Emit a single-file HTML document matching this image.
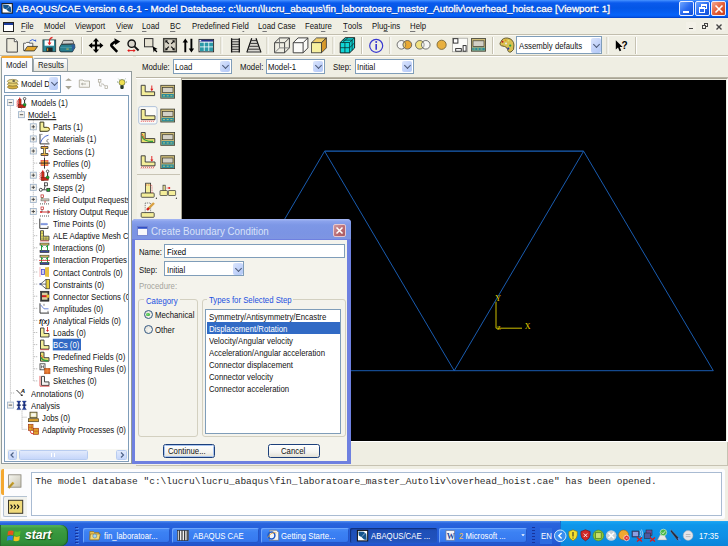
<!DOCTYPE html>
<html><head><meta charset="utf-8">
<style>
*{margin:0;padding:0;box-sizing:border-box}
html,body{width:728px;height:546px;overflow:hidden;background:#EFEEE3;font-family:"Liberation Sans",sans-serif;font-size:7.6px;color:#000;position:relative}
.a{position:absolute}
.t{position:absolute;white-space:nowrap;line-height:10px;font-size:8.8px;transform:scaleX(.885);transform-origin:0 0}
svg{position:absolute;overflow:visible}
#title{left:0;top:0;width:728px;height:18px;background:linear-gradient(#4A94FF 0px,#2A78F8 1.2px,#0A5AEC 3px,#0456E6 8px,#055DF0 12px,#0664FA 15px,#0458EA 16.6px,#003CC4 18px)}
#title .tt{left:16px;top:3px;color:#fff;font-weight:normal;font-size:9.8px;line-height:12px;-webkit-text-stroke:0.3px #fff;text-shadow:0.6px 0.6px 0 #1A3A9A}
.tb{top:1px;width:15px;height:15px;border:1px solid #E8EEFF;border-radius:2px;background:linear-gradient(135deg,#6FA6FF,#2A6BF0 50%,#0E4ED6)}
#menubar{left:0;top:18px;width:728px;height:17px;border-bottom:1px solid #D3CFBE}
.mi{top:3.4px;color:#111}
.mi u{text-decoration:none;border-bottom:1px solid #777;line-height:7.4px;display:inline-block}
.sep{width:1px;background:#C5C2B2;border-right:1px solid #fff}
.combo{background:#fff;border:1px solid #7F9DB9}
.dd{position:absolute;width:10px;background:linear-gradient(135deg,#DCE6FC,#C4D4FA 50%,#B2C8F6);border-radius:2px}
.dd:after{content:"";position:absolute;left:50%;top:50%;width:4px;height:4px;margin-left:-2.1px;margin-top:-3.4px;border-right:1.7px solid #4D5A78;border-bottom:1.7px solid #4D5A78;transform:rotate(45deg)}
</style></head><body>

<!-- TITLE -->
<div id="title" class="a">
 <svg style="left:0;top:0" width="16" height="18"><rect x="2" y="3.6" width="10.3" height="9.5" fill="#fff" stroke="#111" stroke-width="1"/><path d="M3 4.6 L8.2 4.9 L10.8 7 L11.3 12.2 L8.6 11.6 L6.3 9.6 L3.4 8.3 Z" fill="#14558E"/><path d="M4.5 11 L10.6 5" stroke="#fff" stroke-width="0.8" stroke-dasharray="1,0.8"/></svg>
 <div class="t tt" style="transform:scaleX(1.013);transform-origin:0 0">ABAQUS/CAE Version 6.6-1 - Model Database: c:\lucru\lucru_abaqus\fin_laboratoare_master_Autoliv\overhead_hoist.cae [Viewport: 1]</div>
 <div class="a tb" style="left:679px"><div class="a" style="left:3px;top:9px;width:6px;height:2px;background:#fff"></div></div>
 <div class="a tb" style="left:695px"><div class="a" style="left:5px;top:2px;width:6px;height:5px;border:1px solid #fff;border-top-width:2px"></div><div class="a" style="left:2.5px;top:5px;width:6px;height:5.5px;border:1px solid #fff;border-top-width:2px;background:#2A6BF0"></div></div>
 <div class="a tb" style="left:711px;background:linear-gradient(135deg,#F4A890,#E5603A 50%,#C9401A)"><svg style="left:3px;top:3px" width="8" height="8"><path d="M0.5 0.5 L7.5 7.5 M7.5 0.5 L0.5 7.5" stroke="#fff" stroke-width="1.6"/></svg></div>
</div>

<!-- MENU -->
<div id="menubar" class="a">
 <svg style="left:3px;top:4px" width="11" height="10"><rect x="0.5" y="0.5" width="10" height="9" fill="#fff" stroke="#222"/><rect x="1" y="1" width="9" height="2" fill="#1C3C9C"/></svg>
 <div class="t mi" style="left:20.6px"><u>F</u>ile</div>
 <div class="t mi" style="left:43.7px"><u>M</u>odel</div>
 <div class="t mi" style="left:75px">Vie<u>w</u>port</div>
 <div class="t mi" style="left:116px"><u>V</u>iew</div>
 <div class="t mi" style="left:142.2px"><u>L</u>oad</div>
 <div class="t mi" style="left:170.2px"><u>B</u>C</div>
 <div class="t mi" style="left:191.7px">Predefined Fie<u>l</u>d</div>
 <div class="t mi" style="left:257.9px">L<u>o</u>ad Case</div>
 <div class="t mi" style="left:304.6px">Feat<u>u</u>re</div>
 <div class="t mi" style="left:343px"><u>T</u>ools</div>
 <div class="t mi" style="left:371.9px">Plu<u>g</u>-ins</div>
 <div class="t mi" style="left:409.5px"><u>H</u>elp</div>
 <div class="a" style="left:685.5px;top:3.5px;width:10.5px;height:9.5px;background:#F3F1E8;border-radius:1px"><div class="a" style="left:3px;top:6px;width:4px;height:1.5px;background:#444"></div></div>
 <div class="a" style="left:699.5px;top:3.5px;width:10.5px;height:9.5px;background:#F3F1E8;border-radius:1px"><div class="a" style="left:4px;top:1.5px;width:4.5px;height:4px;border:1px solid #444;border-top-width:1.5px"></div><div class="a" style="left:2px;top:3.5px;width:4.5px;height:4px;border:1px solid #444;border-top-width:1.5px;background:#F3F1E8"></div></div>
 <div class="a" style="left:713.5px;top:3.5px;width:11px;height:9.5px;background:#F3F1E8;border-radius:1px"><svg style="left:2.5px;top:2px" width="6" height="6"><path d="M0.5 0.5 L5.5 5.5 M5.5 0.5 L0.5 5.5" stroke="#444" stroke-width="1.4"/></svg></div>
</div>

<!-- TOOLBAR -->
<div class="a" style="left:0;top:34px;width:728px;height:1px;background:#C2BEAE"></div>
<div class="a" style="left:0;top:35px;width:728px;height:1px;background:#FBFAF4"></div>
<div class="a" style="left:0;top:55px;width:728px;height:1px;background:#C2BEAE"></div>
<div class="a" style="left:0;top:56px;width:728px;height:1px;background:#FFFFFF"></div>
<svg style="left:0;top:0" width="728" height="57">
 <g fill="#C6C2B2"><rect x="81" y="37" width="1" height="17"/><rect x="220.5" y="37" width="1" height="17"/><rect x="266.5" y="37" width="1" height="17"/><rect x="332.5" y="37" width="1" height="17"/><rect x="361" y="37" width="1" height="17"/><rect x="389.3" y="37" width="1" height="17"/><rect x="492" y="37" width="1" height="17"/><rect x="606.5" y="37" width="1" height="17"/><rect x="635" y="37" width="1" height="17"/></g>
 <g fill="#FFFFFF"><rect x="82" y="37" width="1" height="17"/><rect x="221.5" y="37" width="1" height="17"/><rect x="267.5" y="37" width="1" height="17"/><rect x="333.5" y="37" width="1" height="17"/><rect x="362" y="37" width="1" height="17"/><rect x="390.3" y="37" width="1" height="17"/><rect x="493" y="37" width="1" height="17"/><rect x="607.5" y="37" width="1" height="17"/><rect x="636" y="37" width="1" height="17"/></g>
 <!-- new -->
 <path d="M6.8 38.6 H14.3 L17.4 41.7 V52.1 H6.8 Z" fill="#EEEBDD" stroke="#4A4A4A" stroke-width="1"/>
 <path d="M14.3 38.6 V41.7 H17.4" fill="#FFF" stroke="#4A4A4A" stroke-width="0.9"/>
 <!-- open -->
 <path d="M23.6 43.2 H25.8 L26.6 42.4 H29.5 V43.2 H32.8 V50.6 H23.6 Z" fill="#F8F8F6" stroke="#555" stroke-width="0.9"/>
 <path d="M24.3 50.9 L27.4 46.4 H37.6 L34.3 50.9 Z" fill="#E6A82C" stroke="#2A2A2A" stroke-width="0.8"/>
 <path d="M29.5 41.2 Q32.3 38.2 35.3 40.8" fill="none" stroke="#3A62D8" stroke-width="1"/>
 <path d="M34 40.2 L36.2 42 L36.1 39.4 Z" fill="#3A62D8"/>
 <!-- save -->
 <rect x="42.9" y="39.9" width="12.8" height="11.8" fill="#2B8898" stroke="#2A3A3A" stroke-width="0.8"/>
 <rect x="44.6" y="40.4" width="9.4" height="5.3" fill="#FFF"/>
 <rect x="46.4" y="47.5" width="6.2" height="4.2" fill="#1E2424"/>
 <rect x="47.2" y="48.3" width="1" height="2.5" fill="#F0A820"/>
 <path d="M49.5 44.3 V40.5 Q49.8 38 52.5 37.4" fill="none" stroke="#E02828" stroke-width="1.2"/>
 <path d="M47.5 42.6 L49.5 45.2 L51.5 42.6 Z" fill="#E02828"/>
 <!-- print -->
 <path d="M61.6 44.2 L63.4 40.4 H72.6 L73.8 43.6 Z" fill="#F2F2F0" stroke="#2A2A2A" stroke-width="0.8"/>
 <path d="M63.6 41.8 H72.2 M63 43 H72.8" stroke="#9A9A9A" stroke-width="0.6"/>
 <path d="M59.6 47.2 L61.2 44.4 H74.6 L74.9 47.6 L72.4 51.9 H61 Q59.6 51.6 59.6 50.2 Z" fill="#2A7E8E" stroke="#1A2A30" stroke-width="0.8"/>
 <path d="M71.5 44.6 L74.6 44.6 L74.8 47.6 L72.4 51.6 L71.8 48 Z" fill="#2E5E9A"/>
 <path d="M60.2 47.4 H72" stroke="#5AAAB8" stroke-width="0.6"/>
 <rect x="66.3" y="48.6" width="2.4" height="0.9" fill="#D8C050"/>
 <!-- move -->
 <path d="M96 40.5 V50.5 M91 45.5 H101" stroke="#000" stroke-width="2.2"/>
 <path d="M96 38 L92.9 41.6 H99.1 Z M96 53 L92.9 49.4 H99.1 Z M88.6 45.5 L92.2 42.4 V48.6 Z M103.4 45.5 L99.8 42.4 V48.6 Z" fill="#000"/>
 <!-- rotate -->
 <path d="M117.2 51.8 L111.9 46.4 Q110.8 45.2 112 43.9 L115.2 41.4" fill="none" stroke="#000" stroke-width="2.6"/>
 <path d="M114.4 38.3 L120.2 41.6 L115.2 45 Z" fill="#000"/>
 <!-- zoom -->
 <circle cx="131.7" cy="43.7" r="3.7" fill="#D9D6CC" stroke="#111" stroke-width="1.4"/>
 <path d="M134.4 46.4 L138.6 50.5" stroke="#111" stroke-width="1.9"/>
 <path d="M128.6 50.6 H134.2" stroke="#E01818" stroke-width="1"/>
 <path d="M127.2 50.6 L129.3 49 V52.2 Z M135.6 50.6 L133.5 49 V52.2 Z" fill="#E01818"/>
 <!-- box zoom -->
 <rect x="144.5" y="38.6" width="8.4" height="8.2" fill="#E6E2D2" stroke="#333" stroke-width="1"/>
 <path d="M152.6 46.2 L157.6 48.9 L155.5 49.6 L157.4 51.6 L156.5 52.5 L154.6 50.5 L153.7 52.4 Z" fill="#000"/>
 <!-- autofit -->
 <rect x="163.7" y="38.7" width="12.6" height="13" fill="#D6D2C4" stroke="#3E3E38" stroke-width="1.5"/>
 <path d="M166 41 L168.8 43.9 M174 41 L171.2 43.9 M166 49.6 L168.8 46.7 M174 49.6 L171.2 46.7" stroke="#111" stroke-width="1.1"/>
 <path d="M165.2 40.2 L168 40.6 L165.6 43 Z M174.8 40.2 L172 40.6 L174.4 43 Z M165.2 50.4 L168 50 L165.6 47.6 Z M174.8 50.4 L172 50 L174.4 47.6 Z" fill="#111"/>
 <!-- up down -->
 <path d="M185.3 41.5 V52.3 M191.4 38.8 V49.6" stroke="#000" stroke-width="1.9"/>
 <path d="M182.6 42.4 L185.3 38.6 L188 42.4 Z M188.7 48.6 L191.4 52.4 L194.1 48.6 Z" fill="#000"/>
 <!-- grid -->
 <rect x="199" y="39.4" width="14.6" height="12.4" fill="#FFF" stroke="#222" stroke-width="0.9"/>
 <rect x="199.4" y="39.8" width="13.8" height="1.8" fill="#22308E"/>
 <rect x="199.6" y="40.1" width="1.6" height="1.1" fill="#FFF"/>
 <g fill="#2B9AA8"><rect x="200" y="42.6" width="3.8" height="3.9"/><rect x="204.6" y="42.6" width="3.8" height="3.9"/><rect x="209.2" y="42.6" width="3.8" height="3.9"/><rect x="200" y="47.3" width="3.8" height="3.9"/><rect x="204.6" y="47.3" width="3.8" height="3.9"/><rect x="209.2" y="47.3" width="3.8" height="3.9"/></g>
 <!-- ladder -->
 <rect x="231.6" y="38.8" width="7.6" height="13.2" fill="#D8D6D0"/>
 <path d="M231.6 38.2 V52.5 M239.3 38.2 V52.5" stroke="#111" stroke-width="1.3"/>
 <path d="M231.6 39.3 H239.3 M231.6 41.8 H239.3 M231.6 44.3 H239.3 M231.6 46.8 H239.3 M231.6 49.3 H239.3 M231.6 51.8 H239.3" stroke="#222" stroke-width="0.9"/>
 <!-- tri ladder -->
 <path d="M251.7 38.4 L247 52.2 H260.8 L256 38.4 Z" fill="#D8D6D0"/>
 <path d="M251.7 38.2 L246.8 52.4 M256 38.2 L261 52.4" stroke="#111" stroke-width="1.2"/>
 <path d="M251.2 40.6 H256.6 M250.3 43.4 H257.6 M249.3 46.3 H258.6 M248.3 49.2 H259.6 M247 52 H260.8" stroke="#222" stroke-width="0.9"/>
 <!-- wire cube -->
 <g fill="none" stroke="#333" stroke-width="0.9">
  <path d="M274.6 42.7 H284.6 V52.8 H274.6 Z M279.5 37.9 H289.4 V47.9 M274.6 42.7 L279.5 37.9 M284.6 42.7 L289.4 37.9 M284.6 52.8 L289.4 47.9"/>
  <path d="M279.5 37.9 V47.9 H289.4 M279.5 47.9 L274.6 52.8" stroke="#777"/>
 </g>
 <!-- hidden cube -->
 <g fill="#FBFBF8" stroke="#333" stroke-width="0.9">
  <path d="M293.2 42.7 L298.1 37.9 H307.9 V47.9 L303.1 52.8 H293.2 Z"/>
  <path d="M293.2 42.7 H303.1 V52.8 M303.1 42.7 L307.9 37.9" fill="none"/>
 </g>
 <!-- shaded cube -->
 <path d="M311.6 42.7 L316.5 37.9 H326.4 L321.5 42.7 Z" fill="#F0CE6A" stroke="#333" stroke-width="0.8"/>
 <path d="M321.5 42.7 L326.4 37.9 V47.9 L321.5 52.8 Z" fill="#D89A2A" stroke="#333" stroke-width="0.8"/>
 <rect x="311.6" y="42.7" width="9.9" height="10.1" fill="#F6EFA0" stroke="#333" stroke-width="0.8"/>
 <!-- mesh cube -->
 <path d="M340.2 42.5 L345.2 37.7 H354.6 V48 L349.6 52.9 H340.2 Z" fill="#12D6D6" stroke="#111" stroke-width="0.9"/>
 <path d="M340.2 42.5 H349.6 V52.9 M349.6 42.5 L354.6 37.7 M340.2 47.7 H349.6 M344.9 42.5 V52.9 M349.6 47.7 L354.6 42.8 M352.1 40.1 V50.4 M342.7 40.1 H352.1 M347.9 37.7 L342.7 42.5" fill="none" stroke="#0A3030" stroke-width="0.8"/>
 <!-- info -->
 <circle cx="376.2" cy="45.8" r="6.5" fill="none" stroke="#3838D0" stroke-width="1.2"/>
 <circle cx="376.2" cy="42" r="1" fill="#3838D0"/>
 <path d="M376.2 44 V49.8" stroke="#3838D0" stroke-width="1.6"/>
 <!-- venn1 -->
 <circle cx="401.4" cy="44.8" r="4.3" fill="#F6F6F4" stroke="#505050" stroke-width="0.8"/>
 <circle cx="407.4" cy="44.8" r="4.3" fill="#E9A832" stroke="#505050" stroke-width="0.8"/>
 <path d="M404.4 41.7 A4.3 4.3 0 0 1 404.4 47.9 A4.3 4.3 0 0 1 404.4 41.7 Z" fill="#F0D070" stroke="#505050" stroke-width="0.6"/>
 <!-- venn2 -->
 <circle cx="419.8" cy="44.8" r="4.3" fill="#F0E080" stroke="#505050" stroke-width="0.8"/>
 <circle cx="425.8" cy="44.8" r="4.3" fill="#F6F6F4" stroke="#505050" stroke-width="0.8"/>
 <path d="M422.8 41.7 A4.3 4.3 0 0 1 422.8 47.9" fill="none" stroke="#505050" stroke-width="0.6"/>
 <!-- circle -->
 <circle cx="441.6" cy="44.8" r="4.6" fill="#E8B040" stroke="#6A5A30" stroke-width="0.8"/>
 <!-- layout -->
 <rect x="452.6" y="38.2" width="15" height="13.6" fill="#FBFBF8" stroke="#9A9A94" stroke-width="0.7"/>
 <rect x="453.3" y="38.7" width="4.6" height="4.4" fill="#FFF" stroke="#222" stroke-width="0.9"/>
 <rect x="455.7" y="48.6" width="5.6" height="2.6" fill="#FFF" stroke="#222" stroke-width="0.9"/>
 <rect x="463.1" y="45.6" width="3" height="5.6" fill="#FFF" stroke="#222" stroke-width="0.9"/>
 <!-- monitor -->
 <rect x="471.4" y="38.6" width="14.2" height="12.6" fill="#CDBB78" stroke="#3A3A30" stroke-width="0.8"/>
 <rect x="473" y="40.8" width="11" height="5.6" fill="#D3D0C6" stroke="#3A3A30" stroke-width="0.7"/>
 <rect x="472.2" y="47.6" width="12.6" height="2.9" fill="#2A8C9C"/>
 <path d="M473.5 49 H475.5 M477 49 H479 M480.5 49 H482.5" stroke="#E0D070" stroke-width="0.7"/>
 <!-- palette -->
 <path d="M501 41.5 Q502.5 37.6 507.5 38 Q513.5 39 514 45 Q514.5 50.5 511 52 Q508 52.8 507.5 49.5 Q507 47 504.5 46.5 Q500.6 46 500 44.5 Q499.6 43 501 41.5 Z" fill="#D8C050" stroke="#4A4020" stroke-width="0.8"/>
 <circle cx="502.5" cy="41.8" r="1" fill="#C02020"/><circle cx="505.6" cy="40.3" r="0.9" fill="#E09020"/><circle cx="508.5" cy="40.6" r="0.9" fill="#E8E070"/><circle cx="506" cy="43.6" r="1" fill="#E8E8E8"/><circle cx="510.2" cy="45.6" r="1.1" fill="#20A040"/><circle cx="508.3" cy="48.6" r="1.1" fill="#2838A0"/>
 <!-- help cursor -->
 <path d="M615.8 40.2 L615.8 49.6 L618 47.6 L619.6 51.2 L621.2 50.5 L619.7 47 L622.6 47 Z" fill="#000"/>
 <text x="621.5" y="48.5" font-family="Liberation Sans" font-weight="bold" font-size="10" fill="#000">?</text>
</svg>
<div class="a combo" style="left:516.4px;top:36px;width:86px;height:18.3px"><div class="t" style="left:1.2px;top:3.6px;color:#111">Assembly defaults</div><div class="dd" style="left:73.5px;top:1.2px;height:14.6px"></div></div>

<!-- LEFT PANEL -->
<div class="a" style="left:33px;top:57.5px;width:35px;height:14px;border:1px solid #9CA8B4;border-bottom:none;border-radius:2px 2px 0 0;background:linear-gradient(#FFFFFF,#F0EFE8 60%,#E4E2D8)"></div>
<div class="t" style="left:37.5px;top:60.3px;color:#222">Results</div>
<div class="a" style="left:0.5px;top:71px;width:131.5px;height:393px;background:#FCFCFE;border:1px solid #919B9C"></div>
<div class="a" style="left:1px;top:56px;width:32px;height:16px;border:1px solid #919B9C;border-bottom:none;border-radius:2px 2px 0 0;background:#FCFCFE"></div>
<div class="a" style="left:1px;top:56px;width:32px;height:2.2px;background:#F4A830;border-radius:2px 2px 0 0"></div>
<div class="t" style="left:5.8px;top:59.8px;color:#222">Model</div>
<div class="a combo" style="left:4.3px;top:75.3px;width:56.3px;height:17.3px">
 <div class="t" style="left:16px;top:2.6px;color:#111">Model D</div>
 <div class="dd" style="left:43.7px;top:0.9px;height:13px;width:9.4px"></div>
</div>
<svg style="left:0;top:0" width="133" height="470">
 <g transform="translate(7.2,78.8)">
  <ellipse cx="5.5" cy="8.3" rx="5.3" ry="1.8" fill="#D8B040" stroke="#6A5A20" stroke-width="0.6"/>
  <ellipse cx="5.5" cy="5.5" rx="5.3" ry="1.8" fill="#E8D070" stroke="#6A5A20" stroke-width="0.6"/>
  <ellipse cx="5.5" cy="2.5" rx="5.3" ry="1.9" fill="#F0E090" stroke="#6A5A20" stroke-width="0.6"/>
  <ellipse cx="6.5" cy="2.2" rx="1.5" ry="0.7" fill="#333"/>
 </g>
 <path d="M65.2 80.8 L68.5 78.2 L71.9 80.8 Z M65.2 86 L68.5 89.6 L71.9 86 Z" fill="#A8A496"/>
 <path d="M79.3 80 H83 L84 81 H89.5 V87.3 H79.3 Z" fill="#F6F5F0" stroke="#A8A496" stroke-width="0.8"/>
 <path d="M81.5 84 H86 M81.5 84 L82.8 83 M81.5 84 L82.8 85" stroke="#8A877A" stroke-width="0.6"/>
 <rect x="98.3" y="79.5" width="2.6" height="2.6" fill="#fff" stroke="#A8A496" stroke-width="0.7"/>
 <rect x="105" y="85.8" width="2.6" height="2.6" fill="#fff" stroke="#A8A496" stroke-width="0.7"/>
 <path d="M99.6 82.1 V86 H102 M101 84 Q104 83 104.5 86" fill="none" stroke="#A8A496" stroke-width="0.7"/>
 <circle cx="122" cy="82.5" r="3" fill="#F0E050" stroke="#4A5A30" stroke-width="0.6"/>
 <rect x="120.3" y="85.3" width="3.4" height="3.6" fill="#2A3A2A" rx="0.8"/>
 <path d="M117 82 H118 M126 82 H127 M118.5 78.8 L119.3 79.6 M125.5 78.8 L124.7 79.6" stroke="#4A7A4A" stroke-width="0.7"/>
</svg>
<div class="a" style="left:4.3px;top:95px;width:124.7px;height:366.5px;background:#fff;border:1px solid #7F9DB9;overflow:hidden">
<svg style="left:-5.3px;top:-96px" width="133" height="470">
 <g stroke="#B0B0B0" stroke-width="1" stroke-dasharray="1,1" fill="none">
 <path d="M10.4 105.6 V402.1 M10.9 393.0 H15 M21.5 108.1 V111.69999999999999 M33.3 119.69999999999999 V380.9 M33.8 126.8 H38 M33.8 138.89999999999998 H38 M33.8 151.0 H38 M33.8 163.1 H38 M33.8 175.2 H38 M33.8 187.3 H38 M33.8 199.39999999999998 H38 M33.8 211.5 H38 M33.8 223.6 H38 M33.8 235.7 H38 M33.8 247.79999999999998 H38 M33.8 259.9 H38 M33.8 272.0 H38 M33.8 284.1 H38 M33.8 296.2 H38 M33.8 308.29999999999995 H38 M33.8 320.4 H38 M33.8 332.5 H38 M33.8 344.6 H38 M33.8 356.7 H38 M33.8 368.79999999999995 H38 M33.8 380.9 H38 M22 410.6 V429.29999999999995 M22.5 417.19999999999993 H27 M22.5 429.29999999999995 H27"/>
 </g>
 <rect x="7.4" y="99.6" width="6" height="6" fill="#F4F2EC" stroke="#9AB0C8" stroke-width="0.8"/>
 <path d="M8.700000000000001 102.6 H12.1" stroke="#333" stroke-width="0.8"/>
 <g transform="translate(16.0,97.1)"><path d="M0.6 3 L2 4 L0.6 5 L2 6 L0.6 7 L2 8 L0.6 9 L2 10" fill="none" stroke="#E83030" stroke-width="0.6"/><path d="M3.8 0 L2.6 2.6 H5 Z" fill="#E02020"/><rect x="2.6" y="2.4" width="2.5" height="8.3" fill="#D02A1A" stroke="#6A1A10" stroke-width="0.4"/><rect x="2.6" y="7.6" width="6.8" height="3.1" fill="#C02818" stroke="#5A1A10" stroke-width="0.4"/><circle cx="8.6" cy="1.6" r="1.25" fill="#fff" stroke="#222" stroke-width="0.7"/><path d="M8.6 2.9 V6.3" stroke="#111" stroke-width="0.9"/><circle cx="8.6" cy="7.6" r="1.5" fill="#1EA030" stroke="#0A3A10" stroke-width="0.4"/></g>
 <rect x="18.5" y="111.69999999999999" width="6" height="6" fill="#F4F2EC" stroke="#9AB0C8" stroke-width="0.8"/>
 <path d="M19.8 114.69999999999999 H23.2" stroke="#333" stroke-width="0.8"/>
 <rect x="30.299999999999997" y="123.8" width="6" height="6" fill="#F4F2EC" stroke="#9AB0C8" stroke-width="0.8"/>
 <path d="M31.599999999999998 126.8 H35.0 M33.3 125.1 V128.5" stroke="#333" stroke-width="0.8"/>
 <g transform="translate(39.0,121.3)"><path d="M1 0.8 H4.8 V6 H8 Q10.5 6 10.5 8 Q10.5 10 8 10 H1 Z" fill="#F4EE9A" stroke="#3A3A20" stroke-width="1"/><path d="M8.5 6.2 Q10.3 6.5 10.3 8" fill="none" stroke="#C89020" stroke-width="1"/></g>
 <rect x="30.299999999999997" y="135.89999999999998" width="6" height="6" fill="#F4F2EC" stroke="#9AB0C8" stroke-width="0.8"/>
 <path d="M31.599999999999998 138.89999999999998 H35.0 M33.3 137.2 V140.59999999999997" stroke="#333" stroke-width="0.8"/>
 <g transform="translate(39.0,133.39999999999998)"><path d="M1 0.5 V10.5 H10.5" fill="none" stroke="#222" stroke-width="0.9"/><path d="M1.5 9.5 Q3.5 3 9.5 1.8" fill="none" stroke="#3A5AC8" stroke-width="0.9"/><path d="M7.5 7 L9.5 6 M7.5 8 L9.5 9" stroke="#333" stroke-width="0.7"/><path d="M2 1 H3.5" stroke="#555" stroke-width="0.6"/></g>
 <rect x="30.299999999999997" y="148.0" width="6" height="6" fill="#F4F2EC" stroke="#9AB0C8" stroke-width="0.8"/>
 <path d="M31.599999999999998 151.0 H35.0 M33.3 149.3 V152.7" stroke="#333" stroke-width="0.8"/>
 <g transform="translate(39.0,145.5)"><path d="M2 1 H9 V3 H6.5 V8 H9 V10 H2 V8 H4.5 V3 H2 Z" fill="#E8B040" stroke="#333" stroke-width="0.8"/><path d="M5.5 0 V1 M5.5 10 V11 M9.5 5.5 H11" stroke="#E02020" stroke-width="0.8"/><rect x="4.8" y="3.5" width="1.4" height="4" fill="#F8E080"/></g>
 <g transform="translate(39.0,157.6)"><rect x="2" y="3" width="7" height="5" fill="#F0A040" stroke="#E04040" stroke-width="0.7"/><path d="M5.5 0 V11 M0 5.5 H11" stroke="#222" stroke-width="0.9"/></g>
 <rect x="30.299999999999997" y="172.2" width="6" height="6" fill="#F4F2EC" stroke="#9AB0C8" stroke-width="0.8"/>
 <path d="M31.599999999999998 175.2 H35.0 M33.3 173.5 V176.89999999999998" stroke="#333" stroke-width="0.8"/>
 <g transform="translate(39.0,169.7)"><path d="M0.6 3 L2 4 L0.6 5 L2 6 L0.6 7 L2 8 L0.6 9 L2 10" fill="none" stroke="#E83030" stroke-width="0.6"/><path d="M3.8 0 L2.6 2.6 H5 Z" fill="#E02020"/><rect x="2.6" y="2.4" width="2.5" height="8.3" fill="#D02A1A" stroke="#6A1A10" stroke-width="0.4"/><rect x="2.6" y="7.6" width="6.8" height="3.1" fill="#C02818" stroke="#5A1A10" stroke-width="0.4"/><circle cx="8.6" cy="1.6" r="1.25" fill="#fff" stroke="#222" stroke-width="0.7"/><path d="M8.6 2.9 V6.3" stroke="#111" stroke-width="0.9"/><circle cx="8.6" cy="7.6" r="1.5" fill="#1EA030" stroke="#0A3A10" stroke-width="0.4"/></g>
 <rect x="30.299999999999997" y="184.3" width="6" height="6" fill="#F4F2EC" stroke="#9AB0C8" stroke-width="0.8"/>
 <path d="M31.599999999999998 187.3 H35.0 M33.3 185.60000000000002 V189.0" stroke="#333" stroke-width="0.8"/>
 <g transform="translate(39.0,181.8)"><circle cx="1.8" cy="8" r="1.5" fill="#fff" stroke="#222" stroke-width="0.8"/><path d="M3.3 8 H7.5 M5 8 L6.5 3" stroke="#222" stroke-width="0.8"/><rect x="5.5" y="1" width="3" height="3" fill="#eee" stroke="#222" stroke-width="0.7"/><rect x="7.8" y="6.5" width="3" height="3" fill="#20B030" stroke="#222" stroke-width="0.7"/></g>
 <rect x="30.299999999999997" y="196.39999999999998" width="6" height="6" fill="#F4F2EC" stroke="#9AB0C8" stroke-width="0.8"/>
 <path d="M31.599999999999998 199.39999999999998 H35.0 M33.3 197.7 V201.09999999999997" stroke="#333" stroke-width="0.8"/>
 <g transform="translate(39.0,193.89999999999998)"><rect x="2" y="1" width="2.5" height="2.5" fill="#fff" stroke="#C02020" stroke-width="0.7"/><path d="M3 3.5 V6 H9.5" fill="none" stroke="#3A9A3A" stroke-width="0.9"/><rect x="2" y="5" width="8" height="2" fill="#D8D0C0" stroke="#555" stroke-width="0.5"/><path d="M6 7 V9" stroke="#D02020" stroke-width="0.8"/><path d="M1 10 H10" stroke="#555" stroke-width="1" stroke-dasharray="1,1"/></g>
 <rect x="30.299999999999997" y="208.5" width="6" height="6" fill="#F4F2EC" stroke="#9AB0C8" stroke-width="0.8"/>
 <path d="M31.599999999999998 211.5 H35.0 M33.3 209.8 V213.2" stroke="#333" stroke-width="0.8"/>
 <g transform="translate(39.0,206.0)"><rect x="2" y="1" width="2.5" height="2.5" fill="#fff" stroke="#C02020" stroke-width="0.7"/><path d="M1.5 6 H10" stroke="#D03030" stroke-width="1"/><circle cx="2" cy="6" r="0.9" fill="#E02020"/><circle cx="10" cy="6" r="0.9" fill="#E02020"/><path d="M3 3.5 V6 M9 4 V8" stroke="#555" stroke-width="0.7"/><path d="M1 10 H10" stroke="#555" stroke-width="1" stroke-dasharray="1,1"/></g>
 <g transform="translate(39.0,218.1)"><path d="M0.8 0.5 V10.3 H9" fill="none" stroke="#222" stroke-width="0.9"/><path d="M1.5 6 H9" stroke="#4A6AD0" stroke-width="0.9"/><path d="M3 4.8 V7.2 M5 4.8 V7.2 M7 4.8 V7.2" stroke="#4A6AD0" stroke-width="0.7"/><path d="M9 8 V10.5" stroke="#333" stroke-width="0.8"/></g>
 <g transform="translate(39.0,230.2)"><path d="M1.5 0.5 H4.5 V6 H10 V10 H1.5 Z" fill="#E8E060" stroke="#333" stroke-width="0.8"/><path d="M1.5 3 H4.5 M1.5 6 H4.5 M1.5 8 H10 M4.5 6 V10 M7 6 V10" stroke="#555" stroke-width="0.5"/><path d="M1 10.8 H10" stroke="#E02020" stroke-width="0.6"/></g>
 <g transform="translate(39.0,242.29999999999998)"><rect x="1" y="0.8" width="9" height="2" fill="#D8C060" stroke="#333" stroke-width="0.6"/><rect x="1" y="8.2" width="9" height="2" fill="#3A4A9A" stroke="#222" stroke-width="0.6"/><path d="M2.5 2.8 V8.2 M8.5 2.8 V8.2 M2.5 3 L4 5 M8.5 3 L7 5" stroke="#20A040" stroke-width="1"/></g>
 <g transform="translate(39.0,254.39999999999998)"><rect x="1" y="0.8" width="9" height="2" fill="#D8C060" stroke="#333" stroke-width="0.6"/><rect x="1" y="8.2" width="9" height="2" fill="#3A4A9A" stroke="#222" stroke-width="0.6"/><path d="M2.5 2.8 V8.2 M8.5 2.8 V8.2 M2.5 3 L4 5 M8.5 3 L7 5" stroke="#20A040" stroke-width="1"/><path d="M0 6 H11" stroke="#E02020" stroke-width="0.8"/></g>
 <g transform="translate(39.0,266.5)"><path d="M6 1 L10 0.5 V10.5 L6 10 Z" fill="#E8C040"/><rect x="2.5" y="3" width="3" height="5" fill="#C8C8F0" stroke="#4A4AD0" stroke-width="0.8"/><path d="M1 1 V10" stroke="#E02020" stroke-width="0.7" stroke-dasharray="1,1"/></g>
 <g transform="translate(39.0,278.6)"><rect x="7" y="0.8" width="3.5" height="9.4" fill="#E8D040" stroke="#333" stroke-width="0.7"/><path d="M7 0.8 L1.5 5.5 L7 10.2 M1.5 5.5 H7" fill="none" stroke="#333" stroke-width="0.7"/><rect x="0.5" y="4.5" width="2" height="2" fill="#4A5A9A"/></g>
 <g transform="translate(39.0,290.7)"><rect x="1.5" y="0.5" width="8.5" height="10" fill="#3A3A3A" stroke="#222" stroke-width="0.5"/><rect x="3" y="2" width="5.5" height="7" fill="#D8D0A0"/><rect x="3" y="4.5" width="5" height="2" fill="#D02020"/><rect x="7.5" y="4" width="2.5" height="3" fill="#E8C030"/></g>
 <g transform="translate(39.0,302.79999999999995)"><path d="M1 0.5 V10.3 H10" fill="none" stroke="#222" stroke-width="0.9"/><path d="M1.5 2 L5 6 H9.5" fill="none" stroke="#4A6AD0" stroke-width="0.8"/><path d="M5 1 V3 M9 8 V10" stroke="#333" stroke-width="0.6"/></g>
 <g transform="translate(39.0,314.9)"><text x="0" y="8.8" font-family="Liberation Sans" font-style="italic" font-weight="bold" font-size="8" fill="#111" textLength="10.5" lengthAdjust="spacingAndGlyphs">f(x)</text></g>
 <g transform="translate(39.0,327.0)"><path d="M1.5 1 H5 V6.5 H10 V10 H1.5 Z" fill="#F4EE9A" stroke="#333" stroke-width="0.9"/><path d="M8.5 0 V4" stroke="#E02020" stroke-width="0.9"/><path d="M7 3 L8.5 5 L10 3 Z" fill="#E02020"/></g>
 <g transform="translate(39.0,339.1)"><path d="M1.5 1 H5 V6.5 H10 V10 H1.5 Z" fill="#F4EE9A" stroke="#333" stroke-width="0.9"/><path d="M1 11 L2 10.2 L3 11 L4 10.2 L5 11 L6 10.2 L7 11 L8 10.2 L9 11 L10 10.2" fill="none" stroke="#E02020" stroke-width="0.6"/></g>
 <g transform="translate(39.0,351.2)"><path d="M1.5 1 H5 V6.5 H10 V10 H1.5 Z" fill="#E8E070" stroke="#333" stroke-width="0.9"/><path d="M2 6 Q3 9.5 9 9.5" fill="none" stroke="#30A040" stroke-width="1.4"/><path d="M2.5 4 L4 7" stroke="#E04020" stroke-width="0.8"/></g>
 <g transform="translate(39.0,363.29999999999995)"><rect x="1" y="0.5" width="5" height="6" fill="#fff" stroke="#333" stroke-width="0.8"/><path d="M2.5 2 V5 M4.5 2 V5 M2.5 3.5 H4.5" stroke="#333" stroke-width="0.6"/><rect x="5.5" y="5" width="5.5" height="5.5" fill="#E06A20" stroke="#A04010" stroke-width="0.5"/><path d="M5.5 7.7 H11 M8.2 5 V10.5" stroke="#F0A060" stroke-width="0.5"/></g>
 <g transform="translate(39.0,375.4)"><path d="M2.5 1 H5.5 V6.5 H10 V10 H2.5 Z" fill="#F2F2F0" stroke="#333" stroke-width="0.9"/><path d="M1 0.5 V10.8 H10.5" fill="none" stroke="#E02020" stroke-width="0.7"/></g>
 <g transform="translate(16.0,387.5)"><path d="M0.5 2.5 L6.5 8.5" stroke="#222" stroke-width="0.9"/><path d="M6.5 8.5 L4.5 8.3 L6.3 6.5 Z" fill="#222"/><text x="4.8" y="5.5" font-family="Liberation Sans" font-weight="bold" font-style="italic" font-size="6" fill="#111">A</text></g>
 <rect x="7.4" y="402.1" width="6" height="6" fill="#F4F2EC" stroke="#9AB0C8" stroke-width="0.8"/>
 <path d="M8.700000000000001 405.1 H12.1" stroke="#333" stroke-width="0.8"/>
 <g transform="translate(15.8,399.6)"><g fill="#2A4AB0" stroke="#102060" stroke-width="0.4"><path d="M1 1.5 H5 L3.7 3.2 H2.3 Z M2.3 3.2 H3.7 V8 H2.3 Z M1 10 H5 L3.7 8 H2.3 Z"/><path d="M6.5 1.5 H10.5 L9.2 3.2 H7.8 Z M7.8 3.2 H9.2 V8 H7.8 Z M6.5 10 H10.5 L9.2 8 H7.8 Z"/></g><path d="M1 5.5 H5 M6.5 5.5 H10.5" stroke="#102060" stroke-width="1.2"/></g>
 <g transform="translate(28.0,411.69999999999993)"><rect x="2" y="0.5" width="7" height="5.5" fill="#E8E0A0" stroke="#4A4020" stroke-width="0.8"/><rect x="3.2" y="1.7" width="4.6" height="3" fill="#F8F8F0"/><rect x="0.5" y="7" width="10" height="3" fill="#D8A030" stroke="#4A4020" stroke-width="0.7"/></g>
 <g transform="translate(27.5,423.79999999999995)"><rect x="1" y="0.5" width="4.5" height="6" fill="#E8C030" stroke="#A03010" stroke-width="0.7"/><path d="M2.5 1 V6 M4 1 V6 M1 3.5 H5.5" stroke="#C04020" stroke-width="0.5"/><rect x="6" y="4.5" width="5" height="6" fill="#E8C030" stroke="#A03010" stroke-width="0.7"/><path d="M7.5 5 V10 M9.5 5 V10 M6 7.5 H11" stroke="#C04020" stroke-width="0.5"/><path d="M2.5 7 Q3 10.5 6 10" fill="none" stroke="#E02020" stroke-width="0.9"/></g>
 <rect x="52.8" y="338.7" width="28.2" height="11.7" fill="#316AC5"/>
 <path d="M27.9 119.7 H56.3" stroke="#000" stroke-width="1"/>
</svg>
<div class="t" style="left:25.9px;top:2.10px;color:#111">Models (1)</div>
<div class="t" style="left:22.6px;top:14.20px;color:#111">Model-1</div>
<div class="t" style="left:48.2px;top:26.30px;color:#111">Parts (1)</div>
<div class="t" style="left:48.2px;top:38.40px;color:#111">Materials (1)</div>
<div class="t" style="left:48.2px;top:50.50px;color:#111">Sections (1)</div>
<div class="t" style="left:48.2px;top:62.60px;color:#111">Profiles (0)</div>
<div class="t" style="left:48.2px;top:74.70px;color:#111">Assembly</div>
<div class="t" style="left:48.2px;top:86.80px;color:#111">Steps (2)</div>
<div class="t" style="left:48.2px;top:98.90px;color:#111">Field Output Requests</div>
<div class="t" style="left:48.2px;top:111.00px;color:#111">History Output Requests</div>
<div class="t" style="left:48.2px;top:123.10px;color:#111">Time Points (0)</div>
<div class="t" style="left:48.2px;top:135.20px;color:#111">ALE Adaptive Mesh Controls</div>
<div class="t" style="left:48.2px;top:147.30px;color:#111">Interactions (0)</div>
<div class="t" style="left:48.2px;top:159.40px;color:#111">Interaction Properties</div>
<div class="t" style="left:48.2px;top:171.50px;color:#111">Contact Controls (0)</div>
<div class="t" style="left:48.2px;top:183.60px;color:#111">Constraints (0)</div>
<div class="t" style="left:48.2px;top:195.70px;color:#111">Connector Sections (0)</div>
<div class="t" style="left:48.2px;top:207.80px;color:#111">Amplitudes (0)</div>
<div class="t" style="left:48.2px;top:219.90px;color:#111">Analytical Fields (0)</div>
<div class="t" style="left:48.2px;top:232.00px;color:#111">Loads (0)</div>
<div class="t" style="left:48.2px;top:244.10px;color:#fff">BCs (0)</div>
<div class="t" style="left:48.2px;top:256.20px;color:#111">Predefined Fields (0)</div>
<div class="t" style="left:48.2px;top:268.30px;color:#111">Remeshing Rules (0)</div>
<div class="t" style="left:48.2px;top:280.40px;color:#111">Sketches (0)</div>
<div class="t" style="left:25.9px;top:292.50px;color:#111">Annotations (0)</div>
<div class="t" style="left:25.9px;top:304.60px;color:#111">Analysis</div>
<div class="t" style="left:37.0px;top:316.70px;color:#111">Jobs (0)</div>
<div class="t" style="left:37.0px;top:328.80px;color:#111">Adaptivity Processes (0)</div>
<div class="a" style="left:1.5px;top:352.8px;width:121.7px;height:11px;background:#F7F7F2"></div>
<div class="a" style="left:2.4px;top:353.5px;width:9.6px;height:10px;border:1px solid #B8CCF0;border-radius:1.5px;background:linear-gradient(#E2EAFC,#C6D6FA)"></div>
<svg style="left:5px;top:356px" width="5" height="6"><path d="M3.5 0.5 L1 3 L3.5 5.5" fill="none" stroke="#4D6185" stroke-width="1.2"/></svg>
<div class="a" style="left:14px;top:353.5px;width:69px;height:10px;border:1px solid #B8CCF0;border-radius:1.5px;background:linear-gradient(#E2EAFC,#C6D6FA)"></div>
<div class="a" style="left:46px;top:356.5px;width:4px;height:4px;border-left:1px solid #fff;border-right:1px solid #fff"></div>
<div class="a" style="left:111px;top:353.5px;width:10.6px;height:10px;border:1px solid #B8CCF0;border-radius:1.5px;background:linear-gradient(#E2EAFC,#C6D6FA)"></div>
<svg style="left:114.5px;top:356px" width="5" height="6"><path d="M1 0.5 L3.5 3 L1 5.5" fill="none" stroke="#4D6185" stroke-width="1.2"/></svg>
</div>
<!-- MODULE BAR -->
<div class="t" style="left:142px;top:62px;color:#111">Module:</div>
<div class="a combo" style="left:172.9px;top:59.2px;width:59px;height:14.8px"><div class="t" style="left:1.5px;top:1.4px;color:#111">Load</div><div class="dd" style="left:46.3px;top:1px;height:11px"></div></div>
<div class="t" style="left:239.8px;top:62px;color:#111">Model:</div>
<div class="a combo" style="left:265.9px;top:59.2px;width:58.8px;height:14.8px"><div class="t" style="left:1.5px;top:1.4px;color:#111">Model-1</div><div class="dd" style="left:46.3px;top:1px;height:11px"></div></div>
<div class="t" style="left:332.6px;top:62px;color:#111">Step:</div>
<div class="a combo" style="left:354.7px;top:59.2px;width:59px;height:14.8px"><div class="t" style="left:1.5px;top:1.4px;color:#111">Initial</div><div class="dd" style="left:46.3px;top:1px;height:11px"></div></div>
<div class="a" style="left:136px;top:77px;width:592px;height:1px;background:#B8B4A4"></div>
<div class="a" style="left:136px;top:78px;width:592px;height:1px;background:#fff"></div>

<!-- TOOLBOX -->
<div class="a" style="left:133px;top:56px;width:3px;height:409px;background:#EFEEE3"></div>
<div class="a" style="left:136.5px;top:79px;width:44.5px;height:386px;background:#F3F2EA"></div>
<div class="a" style="left:137px;top:173.5px;width:43px;height:1px;background:#C8C4B4"></div>
<svg style="left:0;top:0" width="185" height="230">
 <rect x="138.7" y="106.6" width="18.3" height="17.4" rx="2" fill="#FBFBF8" stroke="#A8BCD8" stroke-width="0.9"/>
 <!-- row1 -->
 <path d="M141.2 85.3 H145.2 V91.8 H154.6 V95.6 H141.2 Z" fill="#F4EE9A" stroke="#333" stroke-width="0.9"/>
 <path d="M151.8 85.5 V90" stroke="#E01818" stroke-width="0.9"/><path d="M150.3 88.8 L151.8 91.2 L153.3 88.8 Z" fill="#E01818"/>
 <!-- row2 -->
 <path d="M141.2 109.5 H145.2 V115.8 H155 V119.6 H141.2 Z" fill="#F4EE9A" stroke="#333" stroke-width="0.9"/>
 <path d="M141 122 L142 120.4 M143 122 L144 120.4 M145 122 L146 120.4 M147 122 L148 120.4 M149 122 L150 120.4 M151 122 L152 120.4 M153 122 L154 120.4" stroke="#E02020" stroke-width="0.6"/>
 <!-- row3 -->
 <path d="M141.2 132.5 H145.2 V138.6 H154.8 V142.6 H141.2 Z" fill="#E8E070" stroke="#333" stroke-width="0.9"/>
 <path d="M142 136 Q143 141.5 153 141.5" fill="none" stroke="#30A040" stroke-width="1.3"/><path d="M142.2 134 L144.5 139" stroke="#E04020" stroke-width="0.8"/>
 <!-- row4 -->
 <path d="M141.2 155.8 H145.2 V162 H155 V165.8 H141.2 Z" fill="#F4EE9A" stroke="#333" stroke-width="0.9"/>
 <path d="M151.8 156 V160.5" stroke="#E01818" stroke-width="0.9"/><path d="M150.3 159.4 L151.8 161.8 L153.3 159.4 Z" fill="#E01818"/>
 <path d="M141 168.5 L142 166.4 M143 168.5 L144 166.4 M145 168.5 L146 166.4 M147 168.5 L148 166.4 M149 168.5 L150 166.4 M151 168.5 L152 166.4 M153 168.5 L154 166.4" stroke="#E02020" stroke-width="0.6"/>
 <!-- monitors -->
 <g id="mon">
 <rect x="160.8" y="85.3" width="13.8" height="12.9" fill="#CDBB78" stroke="#3A3A30" stroke-width="0.8"/>
 <rect x="162.4" y="87.6" width="10.6" height="5" fill="#D3D0C6" stroke="#3A3A30" stroke-width="0.7"/>
 <rect x="161.6" y="94" width="12.2" height="3.6" fill="#2A8C9C"/>
 <path d="M163 95.8 H165 M166.7 95.8 H168.7 M170.4 95.8 H172.4" stroke="#E0D070" stroke-width="0.8"/>
 </g>
 <use href="#mon" x="0" y="23.8"/>
 <use href="#mon" x="0" y="47.1"/>
 <use href="#mon" x="0" y="70.4"/>
 <!-- row5 -->
 <rect x="145.6" y="183.2" width="5" height="10" fill="#F4EE9A" stroke="#333" stroke-width="0.8"/>
 <rect x="141.2" y="193" width="13" height="4.3" rx="0.8" fill="#F4EE9A" stroke="#333" stroke-width="0.8"/>
 <path d="M146 185 H150 L152 185.5 V193" fill="none" stroke="#E02020" stroke-width="0.6" stroke-dasharray="1,0.8"/>
 <path d="M155.5 198.8 L157 197.3 V198.8 Z" fill="#111"/>
 <rect x="163" y="185.2" width="2.2" height="6" fill="#F4EE9A" stroke="#333" stroke-width="0.7"/>
 <rect x="160" y="190.5" width="7.4" height="5" rx="0.6" fill="#F4EE9A" stroke="#333" stroke-width="0.7"/>
 <rect x="168.4" y="190.5" width="7.2" height="5" rx="0.6" fill="#F4EE9A" stroke="#333" stroke-width="0.7"/>
 <circle cx="169.2" cy="188" r="1.1" fill="#E02020"/><path d="M166.5 188 H168" stroke="#E02020" stroke-width="0.5"/>
 <path d="M175.5 198.8 L177 197.3 V198.8 Z" fill="#111"/>
 <!-- row6 -->
 <rect x="145.2" y="203" width="5.4" height="9.6" fill="#F6F6F0" stroke="#333" stroke-width="0.6" stroke-dasharray="1,0.8"/>
 <rect x="141.2" y="212.6" width="13" height="4.7" rx="0.8" fill="#F4EE9A" stroke="#333" stroke-width="0.8"/>
 <path d="M147.5 209.5 L154 203" stroke="#D8A040" stroke-width="2.4"/>
 <path d="M147 210 L149 208" stroke="#D02020" stroke-width="2.4"/>
</svg>

<!-- PROMPT AREA -->
<div class="a" style="left:136px;top:464.5px;width:592px;height:1px;background:#C6C2B2"></div>
<div class="a" style="left:727px;top:441px;width:1px;height:24.5px;background:#C6C2B2"></div>

<!-- VIEWPORT -->
<div class="a" style="left:180.5px;top:78.3px;width:547px;height:364px;border-top:1.5px solid #A8A494;border-left:1.5px solid #A8A494;border-bottom:2px solid #FFFFFF;border-right:1.2px solid #FFFFFF"></div>
<div class="a" style="left:182px;top:79.8px;width:544.3px;height:361px;background:#000;overflow:hidden">
 <svg style="left:0;top:0" width="545" height="362">
  <g transform="translate(-182,-79.8)" fill="none" stroke="#1A60B8" stroke-width="0.95">
   <path d="M195.6 370.5 L324.6 151 L454.2 370.5 L583.6 151 L713.3 370.5 Z"/>
   <path d="M324.6 151 H583.6" stroke-width="1.2"/>
  </g>
  <g transform="translate(-182,-79.8)" fill="none" stroke="#D8C800" stroke-width="0.95">
   <path d="M496 301.5 L496 328 L522 328"/>
  </g>
  <g transform="translate(-182,-79.8)" fill="#E8D800" font-family="Liberation Serif" font-size="8">
   <text x="495.3" y="300.8">Y</text><text x="524.8" y="329">X</text><text x="497" y="329.5" font-size="6">Z</text>
  </g>
 </svg>
</div>

<!-- DIALOG -->
<div class="a" style="left:132.1px;top:219.3px;width:218.6px;height:245px;background:#6E80E0;border-radius:4px 4px 0 0"></div>
<div class="a" style="left:132.1px;top:219.3px;width:218.6px;height:20.2px;border-radius:4px 4px 0 0;background:linear-gradient(#A6B8F4 0%,#8AA2EC 12%,#7D97E6 30%,#7B94E4 70%,#7E95E2 100%)"></div>
<div class="a" style="left:135.2px;top:239.5px;width:212.3px;height:221.3px;background:#F4F3EC"></div>
<svg style="left:136.5px;top:225.5px" width="11" height="10"><rect x="0.5" y="0.5" width="10" height="9" fill="#F8F8FA" stroke="#6A7ACC" stroke-width="0.8"/><rect x="0.8" y="0.8" width="9.4" height="2" fill="#3050C8"/></svg>
<div class="t" style="left:150.7px;top:225.6px;color:#D9E2F8;font-size:10.5px;font-weight:normal;line-height:11px;transform:scaleX(.93)">Create Boundary Condition</div>
<div class="a" style="left:332.9px;top:224.1px;width:13px;height:12.5px;border:1px solid #E6C8D0;border-radius:2px;background:linear-gradient(135deg,#D09AA0,#B86870 60%,#A85A64)"><svg style="left:2.6px;top:2.4px" width="7" height="7"><path d="M0.5 0.5 L6.5 6.5 M6.5 0.5 L0.5 6.5" stroke="#fff" stroke-width="1.5"/></svg></div>

<div class="t" style="left:138.5px;top:246.5px;color:#111">Name:</div>
<div class="a" style="left:164px;top:243.6px;width:181.4px;height:14.2px;background:#fff;border:1px solid #7F9DB9"></div>
<div class="t" style="left:166.6px;top:246.5px;color:#000">Fixed</div>
<div class="a" style="left:174.3px;top:246px;width:1px;height:9px;background:#000;display:none"></div>
<div class="t" style="left:138.5px;top:264.5px;color:#111">Step:</div>
<div class="a combo" style="left:164px;top:261.3px;width:80.3px;height:14.7px"><div class="t" style="left:2.2px;top:2.7px;color:#111">Initial</div><div class="dd" style="left:68px;top:0.9px;height:12px"></div></div>
<div class="t" style="left:138.5px;top:280.5px;color:#A4A49C">Procedure:</div>

<div class="a" style="left:138.3px;top:298.9px;width:59.5px;height:138.5px;border:1px solid #D3D0C0;border-radius:3px"></div>
<div class="a" style="left:144px;top:296px;width:36px;height:8px;background:#F4F3EC"></div>
<div class="t" style="left:146px;top:295.6px;color:#1A4FE0">Category</div>
<div class="a" style="left:201.7px;top:298.9px;width:143.9px;height:138.5px;border:1px solid #D3D0C0;border-radius:3px"></div>
<div class="a" style="left:207px;top:296px;width:86px;height:8px;background:#F4F3EC"></div>
<div class="t" style="left:209.3px;top:295.2px;color:#1A4FE0">Types for Selected Step</div>

<div class="a" style="left:143.5px;top:310.1px;width:9.2px;height:9.2px;border-radius:50%;border:1px solid #355A84;background:radial-gradient(circle at 60% 60%,#F8F8F4,#DCDAD0)"></div>
<div class="a" style="left:146.3px;top:312.9px;width:3.6px;height:3.6px;border-radius:50%;background:radial-gradient(circle at 40% 40%,#7CE07C,#21A121)"></div>
<div class="t" style="left:155px;top:310.3px;color:#111">Mechanical</div>
<div class="a" style="left:143.5px;top:325.1px;width:9.2px;height:9.2px;border-radius:50%;border:1px solid #355A84;background:radial-gradient(circle at 60% 60%,#F8F8F4,#DCDAD0)"></div>
<div class="t" style="left:155px;top:325px;color:#111">Other</div>

<div class="a" style="left:205px;top:308.7px;width:136.2px;height:124.9px;background:#fff;border:1px solid #7F9DB9"></div>
<div class="a" style="left:207px;top:322.4px;width:132.8px;height:11.3px;background:#316AC5"></div>
<div class="t" style="left:208.7px;top:311.9px;color:#111">Symmetry/Antisymmetry/Encastre</div>
<div class="t" style="left:208.7px;top:323.6px;color:#fff">Displacement/Rotation</div>
<div class="t" style="left:208.7px;top:335.9px;color:#111">Velocity/Angular velocity</div>
<div class="t" style="left:208.7px;top:348px;color:#111">Acceleration/Angular acceleration</div>
<div class="t" style="left:208.7px;top:360.1px;color:#111">Connector displacement</div>
<div class="t" style="left:208.7px;top:372.2px;color:#111">Connector velocity</div>
<div class="t" style="left:208.7px;top:384.3px;color:#111">Connector acceleration</div>

<div class="a" style="left:162.9px;top:444.4px;width:51.9px;height:13.4px;border:1px solid #1C3F7A;border-radius:2.5px;background:linear-gradient(#FFFFFF,#F4F4F0 60%,#E2E0D6)"></div>
<div class="a" style="left:163.9px;top:445.4px;width:49.9px;height:11.4px;border:1px solid #A8C4F0;border-radius:1.5px"></div>
<div class="t" style="left:167.8px;top:446.3px;color:#111">Continue...</div>
<div class="a" style="left:267.8px;top:444.4px;width:51.8px;height:13.4px;border:1px solid #1C3F7A;border-radius:2.5px;background:linear-gradient(#FFFFFF,#F4F4F0 60%,#E2E0D6)"></div>
<div class="t" style="left:281.2px;top:446.3px;color:#111">Cancel</div>

<!-- MESSAGE AREA -->
<div class="a" style="left:1px;top:468.6px;width:723.6px;height:50px;background:#FCFCFE;border-radius:2px"></div>
<div class="a" style="left:1px;top:468.6px;width:2.6px;height:26.5px;background:#F4A830;border-radius:2px 0 0 2px"></div>
<div class="a" style="left:3.3px;top:496px;width:24.2px;height:21.2px;background:#F3F3EE;border:1px solid #B4C2D2;border-right:none;border-radius:2px 0 0 2px"></div>
<svg style="left:0;top:460px" width="30" height="60">
 <defs><linearGradient id="pg" x1="0" y1="0" x2="1" y2="1"><stop offset="0" stop-color="#F6F6F0"/><stop offset="1" stop-color="#C8C4B4"/></linearGradient></defs>
 <rect x="8.6" y="14.8" width="12.4" height="12.4" fill="url(#pg)" stroke="#888478" stroke-width="0.8"/>
 <path d="M8.5 28 L13.5 22.5" stroke="#C8A030" stroke-width="2.6"/>
 <path d="M9.5 27 L12.8 23.2" stroke="#6A5A20" stroke-width="0.6" stroke-dasharray="0.8,0.8"/>
 <rect x="8.5" y="40.3" width="14.2" height="13" fill="#F0DA7A" stroke="#3A3628" stroke-width="1"/>
 <path d="M10.6 44.6 L12.3 46.8 L10.6 49 M13.9 44.6 L15.6 46.8 L13.9 49 M17.2 44.6 L18.9 46.8 L17.2 49" fill="none" stroke="#111" stroke-width="1.1"/>
</svg>
<div class="a" style="left:30.8px;top:472.4px;width:691.6px;height:43.4px;background:#fff;border:1px solid #A9BBD2"></div>
<div class="a" style="left:35.2px;top:476.4px;white-space:nowrap;font-family:'Liberation Mono',monospace;font-size:9.5px;line-height:11px;color:#2A2A2A">The model database "c:\lucru\lucru_abaqus\fin_laboratoare_master_Autoliv\overhead_hoist.cae" has been opened.</div>

<!-- TASKBAR -->
<div class="a" style="left:0;top:521.3px;width:728px;height:24.7px;background:linear-gradient(#5B93F0 0px,#3A78E8 1.2px,#2A64DC 2.5px,#2661DC 5px,#245CD8 80%,#2152C8 100%)"></div>
<div class="a" style="left:0;top:524.8px;width:68.2px;height:21.2px;border-radius:0 7px 7px 0;background:linear-gradient(#5AB860 0%,#3E9E44 15%,#36963C 45%,#31903A 80%,#2C8232 100%);box-shadow:inset -1px 0 1px #1A5A1E,inset 1px 0 0 #2A6A2E"></div>
<svg style="left:7px;top:528.5px" width="15" height="14">
 <path d="M1 2.5 Q3.5 1 6.6 2 L6.1 6.2 Q3.2 5.3 0.5 6.6 Z" fill="#E8541C"/>
 <path d="M7.6 2.3 Q10.8 3.3 13.6 1.8 L13 6.2 Q10.2 7.5 7.1 6.5 Z" fill="#5BBF2A"/>
 <path d="M0.3 7.5 Q3 6.2 6 7.1 L5.5 11.5 Q2.6 10.5 -0.2 11.8 Z" fill="#2A7CE8"/>
 <path d="M7 7.3 Q10 8.3 12.8 7 L12.3 11.3 Q9.3 12.8 6.5 11.7 Z" fill="#F2C21C"/>
</svg>
<div class="a" style="left:25px;top:526.6px;color:#fff;font-family:'Liberation Sans',sans-serif;font-style:italic;font-weight:bold;font-size:12.2px;line-height:16px;text-shadow:0.8px 0.8px 0.8px #1A4A1A;white-space:nowrap">start</div>
<div class="a" style="left:75px;top:527px;width:3px;height:16px;background:repeating-linear-gradient(#17349C 0px,#17349C 1.5px,transparent 1.5px,transparent 3px)"></div>
<div class="a" style="left:76px;top:528px;width:3px;height:16px;background:repeating-linear-gradient(#6AA0F8 0px,#6AA0F8 1px,transparent 1px,transparent 3px);opacity:.6"></div>

<div class="a" style="left:83.1px;top:527.6px;width:86.9px;height:15.4px;border-radius:2px;background:linear-gradient(#4A8EF8,#3C81F3 30%,#377AF0 80%,#2F6EE6);box-shadow:inset 1px 1px 0 #6EA6FC,inset -1px -1px 0 #2456C8"></div>
<div class="a" style="left:172px;top:527.6px;width:87px;height:15.4px;border-radius:2px;background:linear-gradient(#4A8EF8,#3C81F3 30%,#377AF0 80%,#2F6EE6);box-shadow:inset 1px 1px 0 #6EA6FC,inset -1px -1px 0 #2456C8"></div>
<div class="a" style="left:260.6px;top:527.6px;width:88.1px;height:15.4px;border-radius:2px;background:linear-gradient(#4A8EF8,#3C81F3 30%,#377AF0 80%,#2F6EE6);box-shadow:inset 1px 1px 0 #6EA6FC,inset -1px -1px 0 #2456C8"></div>
<div class="a" style="left:349.6px;top:527.6px;width:87.7px;height:15.4px;border-radius:2px;background:linear-gradient(#1A46A8,#1E4FB8 20%,#2152BC 80%,#2458C4);box-shadow:inset 1px 1px 1px #10307C"></div>
<div class="a" style="left:439px;top:527.6px;width:87.8px;height:15.4px;border-radius:2px;background:linear-gradient(#4A8EF8,#3C81F3 30%,#377AF0 80%,#2F6EE6);box-shadow:inset 1px 1px 0 #6EA6FC,inset -1px -1px 0 #2456C8"></div>

<svg style="left:0;top:0" width="560" height="546">
 <!-- folder -->
 <path d="M89.8 531.5 H93.5 L94.5 532.5 H99 V539.8 H89.8 Z" fill="#E8C050" stroke="#8A6A20" stroke-width="0.6"/>
 <path d="M90.5 534 H100.3 L99 539.8 H89.8 Z" fill="#F4D878" stroke="#8A6A20" stroke-width="0.6"/>
 <circle cx="94.8" cy="536" r="2" fill="#A8D8F0" stroke="#3A6A9A" stroke-width="0.5"/>
 <!-- abaqus icon -->
 <rect x="177.5" y="530.5" width="11" height="10" fill="#F0F0F0" stroke="#222" stroke-width="0.6"/>
 <path d="M179.3 530.5 V540.5 M182 530.5 V540.5 M184.7 530.5 V540.5 M187.2 530.5 V540.5" stroke="#111" stroke-width="1"/>
 <!-- IE doc -->
 <path d="M269.5 530.3 H276.5 L278.6 532.4 V540.3 H269.5 Z" fill="#F4F4F4" stroke="#6A6A6A" stroke-width="0.6"/>
 <circle cx="271.5" cy="535.5" r="3.4" fill="none" stroke="#1E5AC8" stroke-width="1.5"/>
 <path d="M267.5 537.5 Q272 531 276.5 533" fill="none" stroke="#F0A020" stroke-width="0.7"/>
 <!-- abaqus/cae active icon -->
 <g transform="translate(355.4,526.8)"><rect x="2" y="3.6" width="10.3" height="10.5" fill="#fff" stroke="#111" stroke-width="1"/><path d="M3 4.6 L8.2 4.9 L10.8 7 L11.3 13.2 L8.6 12.6 L6.3 10.4 L3.4 8.8 Z" fill="#14558E"/><path d="M4.5 12 L10.6 5.4" stroke="#fff" stroke-width="0.8" stroke-dasharray="1,0.8"/></g>
 <!-- word -->
 <rect x="446" y="530.6" width="8.6" height="9.6" fill="#F4F6FA" stroke="#6A7A9A" stroke-width="0.7"/>
 <text x="446.8" y="538.6" font-family="Liberation Serif" font-size="8" font-weight="bold" fill="#2A4A9A">W</text>
 <path d="M521.3 534.3 H524.8 L523.05 536.3 Z" fill="#fff"/>
</svg>
<div class="t" style="left:103.7px;top:530.6px;color:#fff">fin_laboratoar...</div>
<div class="t" style="left:192.5px;top:530.6px;color:#fff">ABAQUS CAE</div>
<div class="t" style="left:281.2px;top:530.6px;color:#fff">Getting Starte...</div>
<div class="t" style="left:371px;top:530.6px;color:#fff">ABAQUS/CAE ...</div>
<div class="t" style="left:458.7px;top:530.6px;color:#fff"><span style="color:#F8C040">2</span> Microsoft ...</div>
<div class="a" style="left:531.5px;top:527px;width:3px;height:16px;background:repeating-linear-gradient(#17349C 0px,#17349C 1.5px,transparent 1.5px,transparent 3px)"></div>
<div class="a" style="left:540px;top:527.5px;width:12px;height:16px;background:#2E6CE0"></div>
<div class="t" style="left:541.3px;top:531px;color:#fff">EN</div>

<!-- TRAY -->
<div class="a" style="left:559.5px;top:521.3px;width:168.5px;height:24.7px;background:linear-gradient(#2AA8F4 0px,#14A0F0 1.5px,#0F96EA 4px,#0E90E6 60%,#0B84DA 100%);border-left:1px solid #1A6ACC"></div>
<svg style="left:550px;top:521px" width="178" height="25">
 <g transform="translate(-550,-521)">
 <circle cx="560.2" cy="535.8" r="5.8" fill="#3A8EF0" stroke="#E0F0FF" stroke-width="0.9"/>
 <path d="M561.6 533 L558.8 535.8 L561.6 538.6" fill="none" stroke="#fff" stroke-width="1.4"/>
 <path d="M568.8 531.5 L573 529.8 L577.3 531.5 V535 Q577.3 538.5 573 540.8 Q568.8 538.5 568.8 535 Z" fill="#F4E030" stroke="#7A6A10" stroke-width="0.6"/>
 <path d="M573 532 V536.5 M573 537.6 V538.6" stroke="#222" stroke-width="1"/>
 <path d="M580.9 531.5 L585.5 529.8 L590.1 531.5 V535 Q590.1 538.5 585.5 540.8 Q580.9 538.5 580.9 535 Z" fill="#D02828" stroke="#6A1010" stroke-width="0.6"/>
 <path d="M583.8 533.5 L587.2 537 M587.2 533.5 L583.8 537" stroke="#fff" stroke-width="0.9"/>
 <circle cx="598.4" cy="535.5" r="5.4" fill="#8CC838" stroke="#4A7A20" stroke-width="0.5"/>
 <rect x="595.6" y="532.7" width="5.6" height="5.6" fill="#C8E070" stroke="#4A7A20" stroke-width="0.7"/>
 <circle cx="611.2" cy="535.5" r="5.3" fill="#C8D0D8"/>
 <path d="M608.5 532.7 L614 538.3 M614 532.7 L608.5 538.3" stroke="#fff" stroke-width="1.6"/>
 <circle cx="623.6" cy="535" r="5" fill="#F0A830" stroke="#8A5A10" stroke-width="0.5"/>
 <circle cx="626.6" cy="538" r="2.8" fill="#E02020" stroke="#fff" stroke-width="0.6"/>
 <path d="M625.4 536.8 L627.8 539.2 M627.8 536.8 L625.4 539.2" stroke="#fff" stroke-width="0.6"/>
 <rect x="632" y="531" width="7" height="6" fill="#4A5AA0" stroke="#222" stroke-width="0.5"/>
 <rect x="633" y="532" width="5" height="4" fill="#8AA0E0"/>
 <path d="M640 530.5 Q642 533 640 536 M641.5 529.5 Q644 533 641.5 537" fill="none" stroke="#E0E8F8" stroke-width="0.6"/>
 <path d="M637 537.5 L642 541.5 M642 537.5 L637 541.5" stroke="#E01818" stroke-width="1.3"/>
 <rect x="646" y="530" width="6" height="5.5" fill="#6A50A0" stroke="#222" stroke-width="0.5"/>
 <rect x="644.5" y="533" width="6" height="5.5" fill="#4A5AA0" stroke="#222" stroke-width="0.5"/>
 <path d="M650 537.5 L655 541.5 M655 537.5 L650 541.5" stroke="#E01818" stroke-width="1.3"/>
 <path d="M657.5 540 L660 535 H664.5 L667 540 Z" fill="#E8E8E8" stroke="#888" stroke-width="0.4"/>
 <circle cx="663.4" cy="532.5" r="3.3" fill="#48B848" stroke="#E0F8E0" stroke-width="0.6"/>
 <path d="M661.8 532.5 L663 533.8 L665 531.3" fill="none" stroke="#fff" stroke-width="0.8"/>
 <path d="M671 529.5 L679.5 538.5 L677.5 540.5 L670.5 531.5 Z" fill="#2A2A3A" stroke="#8898B8" stroke-width="0.4"/>
 <path d="M678 538 L680.5 540.8" stroke="#3A8AF0" stroke-width="1.4"/>
 <circle cx="688.1" cy="535.5" r="4.9" fill="#E4E4E8" stroke="#A8A8B0" stroke-width="0.5"/>
 <path d="M685.8 534.5 H690.5 M685.8 536.6 H690.5" stroke="#9A9AA0" stroke-width="0.6"/>
 </g>
</svg>
<div class="t" style="left:699.3px;top:530.5px;color:#fff">17:35</div>

</body></html>
